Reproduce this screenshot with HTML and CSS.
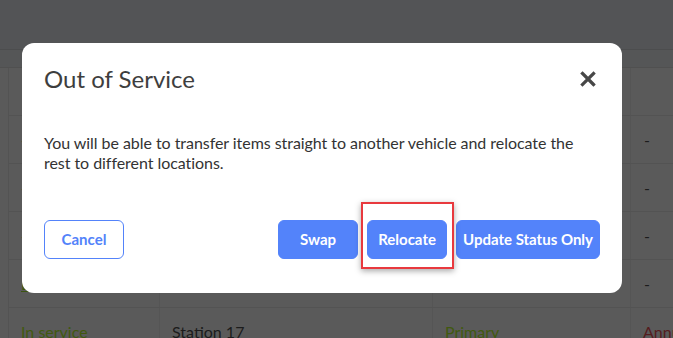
FILE: index.html
```html
<!DOCTYPE html>
<html lang="en">
<head>
    <meta charset="UTF-8">
    <meta name="viewport" content="width=device-width, initial-scale=1.0">
    <title>Out of Service</title>
    <link rel="stylesheet" href="styles.css">
</head>
<body>
    <!-- Dimmed page behind the dialog -->
    <div class="page">
        <div class="topbar"></div>
        <div class="subbar"></div>
        <div class="grid">
            <div class="cell"></div><div class="cell"></div><div class="cell"></div><div class="cell"></div>

            <div class="cell link">-</div><div class="cell"></div><div class="cell"></div><div class="cell dash">-</div>
            <div class="cell link">-</div><div class="cell"></div><div class="cell"></div><div class="cell dash">-</div>
            <div class="cell link">-</div><div class="cell"></div><div class="cell"></div><div class="cell dash">-</div>
            <div class="cell link under">L</div><div class="cell"></div><div class="cell"></div><div class="cell dash">-</div>

            <div class="cell green">In service</div>
            <div class="cell">Station 17</div>
            <div class="cell green">Primary</div>
            <div class="cell red">Annual</div>
        </div>
    </div>

    <!-- Dialog -->
    <div class="modal">
        <div class="modal-head">
            <h2>Out of Service</h2>
            <svg class="close" width="16" height="16" viewBox="0 0 16 16">
                <path d="M2.5 2.5 L13.5 13.5 M13.5 2.5 L2.5 13.5" stroke="#474747" stroke-width="3.2" stroke-linecap="square"/>
            </svg>
        </div>
        <p class="modal-body">You will be able to transfer items straight to another vehicle and relocate the rest to different locations.</p>
        <div class="modal-foot">
            <button class="btn btn-outline">Cancel</button>
            <div class="actions">
                <button class="btn">Swap</button>
                <span class="marked"><button class="btn">Relocate</button></span>
                <button class="btn">Update Status Only</button>
            </div>
        </div>
    </div>
</body>
</html>
```

FILE: styles.css
```css
* {
    margin: 0;
    padding: 0;
    box-sizing: border-box;
}

body {
    font-family: Lato, 'Open Sans', sans-serif;
    background: #5a5a5a;
    width: 673px;
    height: 338px;
    overflow: hidden;
    position: relative;
    -webkit-font-smoothing: antialiased;
}

/* Background page (already dimmed) */
.topbar {
    height: 50px;
    background: #535456;
    border-bottom: 1px solid #4c4d4e;
}

.subbar {
    height: 18px;
    background: #555657;
    border-bottom: 1px solid #505050;
}

.grid {
    margin-left: 8px;
    width: 720px;
    display: grid;
    grid-template-columns: 151px 273px 198px 1fr;
    grid-auto-rows: 48px;
    border-left: 1px solid #535353;
    font-size: 16px;
    color: #1c1c1c;
}

.cell {
    display: flex;
    align-items: center;
    padding: 0 12px;
    border-bottom: 1px solid #535353;
    border-right: 1px solid #555;
    white-space: nowrap;
}

.link {
    color: #3c5511;
}

.under {
    text-decoration: underline;
}

.dash {
    padding-left: 13px;
}

.green {
    color: #41590f;
}

.red {
    color: #551c1e;
}

/* Dialog */
.modal {
    position: absolute;
    top: 43px;
    left: 22px;
    width: 600px;
    background: #fff;
    border-radius: 12px;
    padding: 22px 22px 34px;
}

.modal-head {
    display: flex;
    align-items: center;
    justify-content: space-between;
}

.modal-head h2 {
    font-size: 24px;
    font-weight: 400;
    line-height: 1.2;
    color: #3e3e3e;
}

.close {
    margin-right: 4px;
    margin-top: -1px;
}

.modal-body {
    margin-top: 39px;
    font-size: 16px;
    line-height: 20px;
    letter-spacing: -0.05px;
    color: #333;
    padding-right: 20px;
}

.modal-foot {
    margin-top: 47px;
    display: flex;
    justify-content: space-between;
}

.actions {
    display: flex;
    gap: 9px;
}

.btn {
    font-family: inherit;
    font-size: 15px;
    font-weight: 700;
    height: 39px;
    min-width: 80px;
    padding: 0 6px;
    border: 1px solid #5383fa;
    border-radius: 6px;
    background: #5383fa;
    color: #fff;
}

.btn-outline {
    width: 79px;
    background: #fff;
    color: #5383fa;
}

.marked {
    position: relative;
    display: flex;
}

.marked::after {
    content: '';
    position: absolute;
    left: -6px;
    right: -7px;
    top: -18px;
    bottom: -10px;
    border: 2.5px solid #e8393e;
    box-shadow: 0 2px 6px rgba(0, 0, 0, 0.35);
    pointer-events: none;
}
```
